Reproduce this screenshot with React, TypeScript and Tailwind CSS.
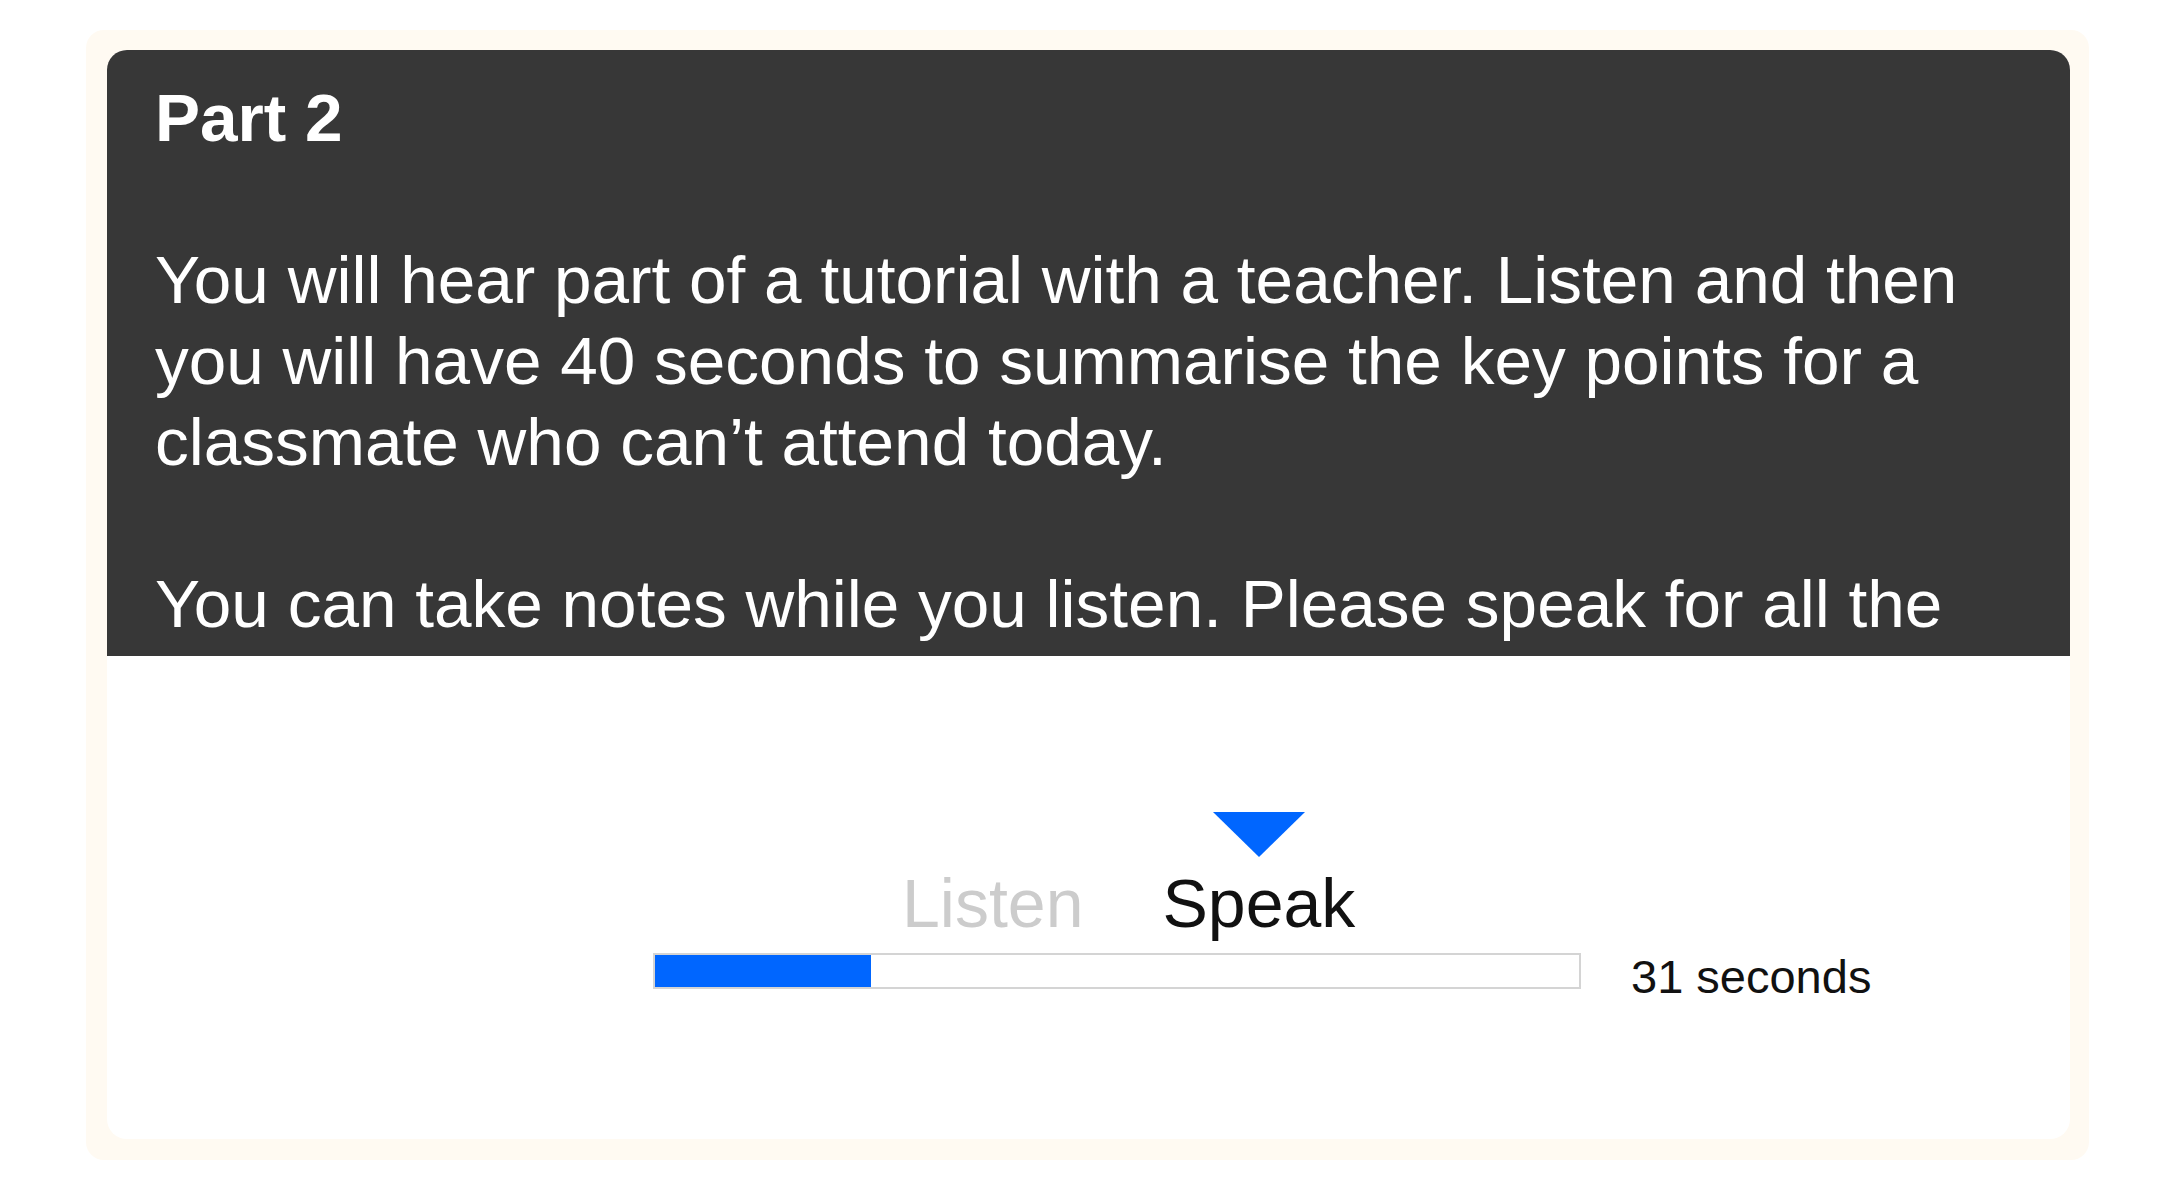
import React from 'react';

const font = { fontFamily: '"Liberation Sans", Arial, sans-serif' };

function ProgressBar({ percent }: { percent: number }) {
  return (
    <div className="h-[36px] w-[928px] border-2 border-[#d4d4d4] bg-white">
      <div className="h-full bg-[#0066ff]" style={{ width: percent + '%' }} />
    </div>
  );
}

export default function App() {
  return (
    <div className="min-h-screen bg-white pl-[86px] pt-[30px]" style={font}>
      <div className="w-[2003px] rounded-[18px] bg-[#fffaf2] pb-[21px] pl-[21px] pr-[19px] pt-[20px]">
        <div className="overflow-hidden rounded-[20px] bg-white">
          {/* instructions */}
          <div className="h-[606px] overflow-hidden bg-[#373737] px-[48px] pt-[27px] text-[67.5px] leading-[81px] text-white">
            <p className="font-bold">Part 2</p>
            <p className="h-[81px]"></p>
            <p>
              You will hear part of a tutorial with a teacher. Listen and then you will have 40
              seconds to summarise the key points for a classmate who can’t attend today.
            </p>
            <p className="h-[81px]"></p>
            <p>
              You can take notes while you listen. Please speak for all the 40 seconds.
            </p>
          </div>

          {/* stage + timer */}
          <div className="h-[483px] pl-[546px] pt-[156px]">
            <div className="flex items-end pl-[249px] text-[68px] leading-[68px]">
              <span className="text-[#cccccc]">Listen</span>
              <div className="ml-[79px] flex flex-col items-center">
                <svg width="92" height="45" viewBox="0 0 92 45" className="mb-[12px]">
                  <polygon points="0,0 92,0 46,45" fill="#0066ff" />
                </svg>
                <span className="text-[#111111]">Speak</span>
              </div>
            </div>
            <div className="mt-[4px] flex items-center">
              <ProgressBar percent={23.4} />
              <span className="ml-[50px] mt-[12px] text-[47px] leading-none text-[#111111]">31 seconds</span>
            </div>
          </div>
        </div>
      </div>
    </div>
  );
}
